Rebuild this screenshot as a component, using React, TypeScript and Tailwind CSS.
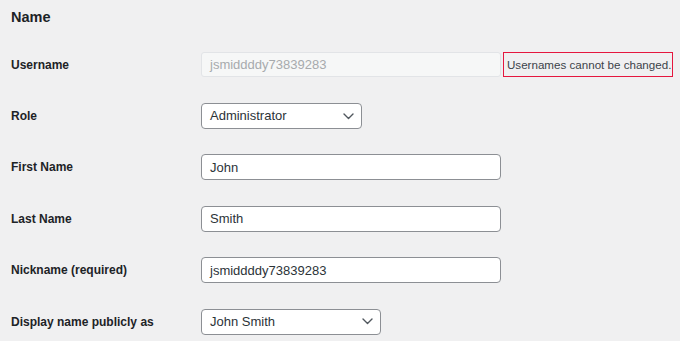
import React from "react";

const Chevron = () => (
  <svg width="11" height="7" viewBox="0 0 11 7" fill="none" className="shrink-0">
    <path d="M1 1l4.5 4.5L10 1" stroke="#50575e" strokeWidth="1.4" strokeLinecap="round" strokeLinejoin="round" />
  </svg>
);

function Row({ label, children }: { label: string; children: React.ReactNode }) {
  return (
    <div className="flex items-center h-[51.4px]">
      <div className="w-[201px] shrink-0 pl-[11px] text-[12px] font-bold text-[#1d2327]">{label}</div>
      <div className="flex items-center">{children}</div>
    </div>
  );
}

function TextBox({ value, disabled }: { value: string; disabled?: boolean }) {
  return (
    <div
      className={
        disabled
          ? "w-[300px] h-[25px] rounded-[3px] border border-[#e2e4e7] bg-[#f6f7f7] pl-[8px] flex items-center text-[13px] text-[#a7aaad]"
          : "w-[300px] h-[26px] rounded-[4px] border border-[#8c8f94] bg-white pl-[8px] flex items-center text-[13px] text-[#2c3338]"
      }
    >
      {value}
    </div>
  );
}

function SelectBox({ value, width }: { value: string; width: string }) {
  return (
    <div
      className={`${width} h-[26px] rounded-[4px] border border-[#8c8f94] bg-white pl-[8px] pr-[7px] flex items-center justify-between text-[13px] text-[#2c3338]`}
    >
      <span>{value}</span>
      <Chevron />
    </div>
  );
}

export default function App() {
  return (
    <div className="w-[680px] h-[341px] overflow-hidden bg-[#f0f0f1] font-['Liberation_Sans',Arial,sans-serif]">
      <div className="h-[39px] pl-[11px] pt-[7px] text-[14.5px] font-bold text-[#1d2327]">Name</div>
      <Row label="Username">
        <TextBox value="jsmiddddy73839283" disabled />
        <div className="ml-[2px] h-[25px] w-[170px] border border-[#e5173f] flex items-center pl-[3px] text-[11.6px] text-[#3c434a] whitespace-nowrap">
          Usernames cannot be changed.
        </div>
      </Row>
      <Row label="Role">
        <SelectBox value="Administrator" width="w-[161px]" />
      </Row>
      <Row label="First Name">
        <TextBox value="John" />
      </Row>
      <Row label="Last Name">
        <TextBox value="Smith" />
      </Row>
      <Row label="Nickname (required)">
        <TextBox value="jsmiddddy73839283" />
      </Row>
      <Row label="Display name publicly as">
        <SelectBox value="John Smith" width="w-[180px]" />
      </Row>
    </div>
  );
}
